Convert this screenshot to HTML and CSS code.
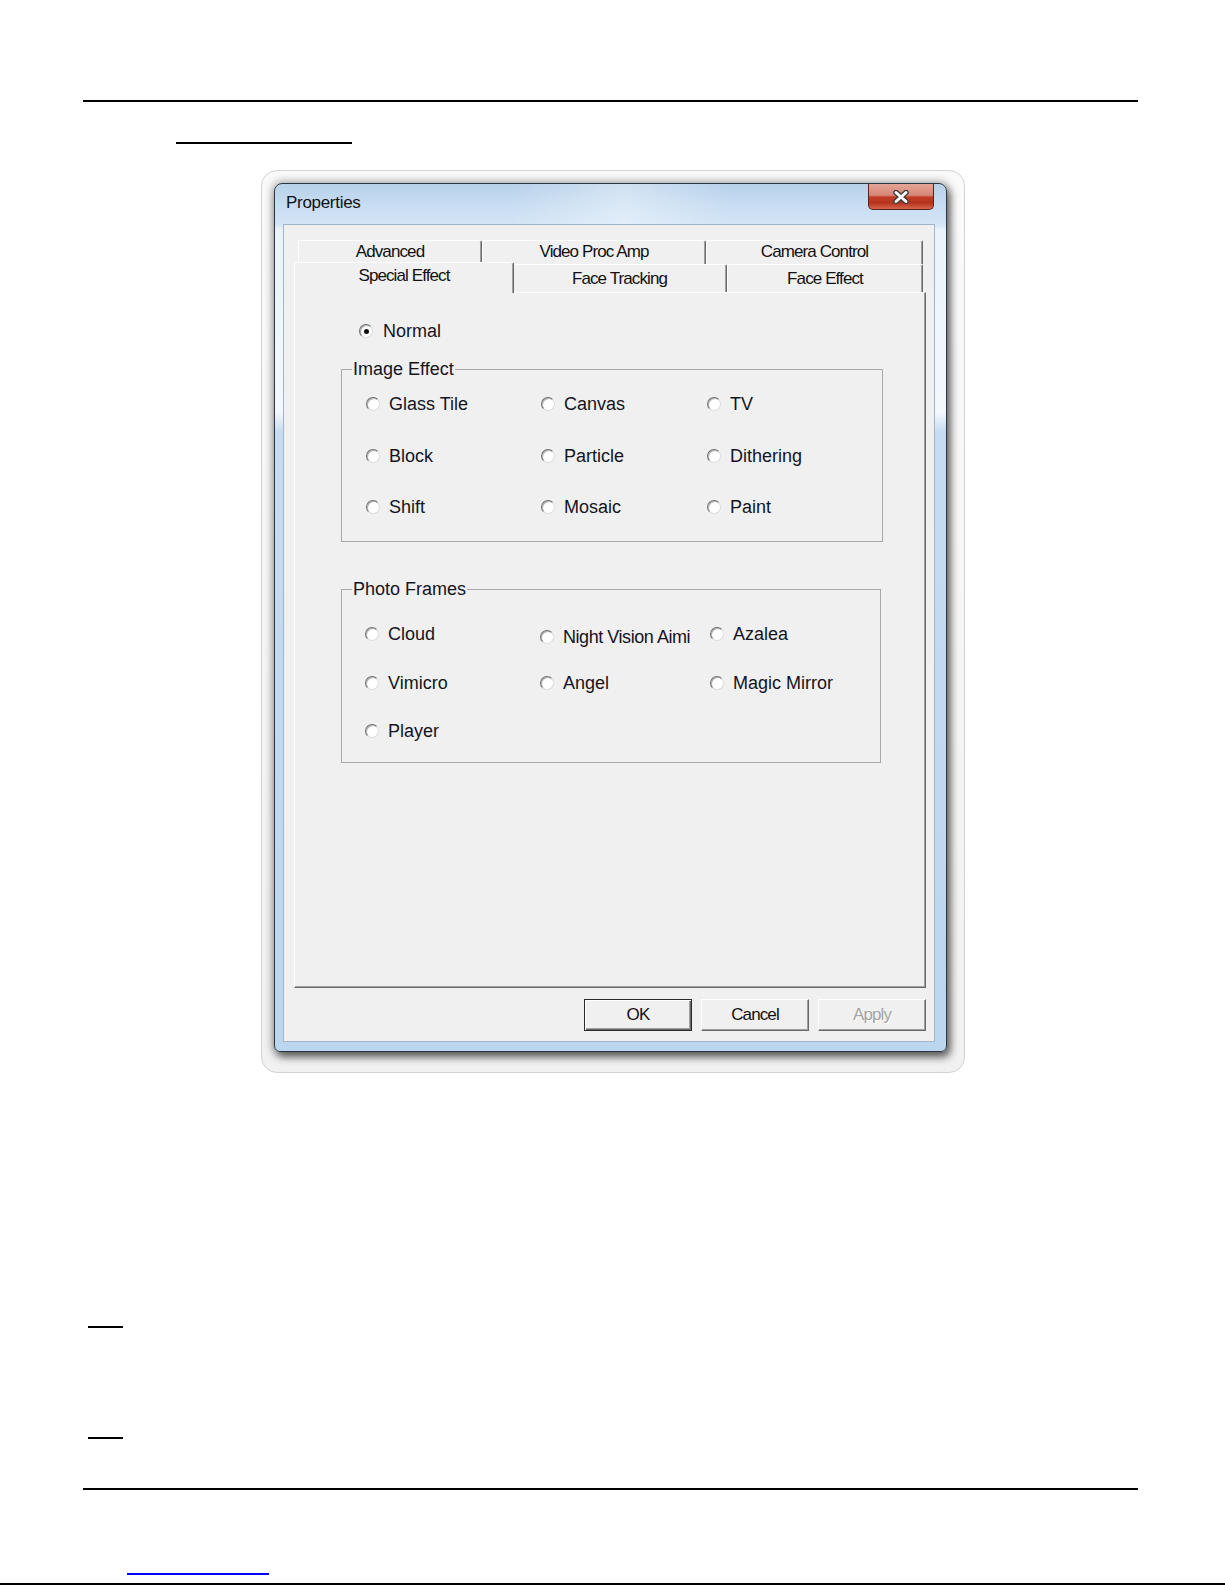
FILE: index.html
```html
<!DOCTYPE html>
<html lang="en">
<head>
    <meta charset="UTF-8">
    <title>Properties</title>
    <link rel="stylesheet" href="styles.css">
</head>
<body>
    <div class="page">
        <div class="rule top_rule"></div>
        <div class="heading_line"></div>

        <div class="shot">
            <div class="window">
                <div class="titlebar">
                    <span class="title">Properties</span>
                    <div class="close_btn">
                        <svg width="18" height="14" viewBox="0 0 18 14">
                            <path d="M4 2.5 L14 11.5 M14 2.5 L4 11.5" stroke="#3a3a3a" stroke-width="5.5" stroke-linecap="round"/>
                            <path d="M4 2.5 L14 11.5 M14 2.5 L4 11.5" stroke="#fff" stroke-width="3" stroke-linecap="round"/>
                        </svg>
                    </div>
                </div>

                <div class="client">
                    <div class="tabs">
                        <div class="tab_row back">
                            <div class="tab t_adv">Advanced</div>
                            <div class="tab t_vpa">Video Proc Amp</div>
                            <div class="tab t_cam">Camera Control</div>
                        </div>
                        <div class="tab_row front">
                            <div class="tab active">Special Effect</div>
                            <div class="tab t_track">Face Tracking</div>
                            <div class="tab t_face">Face Effect</div>
                        </div>
                    </div>

                    <div class="panel">
                        <div class="radio_item normal"><span class="radio checked"></span>Normal</div>

                        <fieldset class="group image_effect">
                            <legend>Image Effect</legend>
                            <div class="options">
                                <div class="radio_item"><span class="radio"></span>Glass Tile</div>
                                <div class="radio_item"><span class="radio"></span>Canvas</div>
                                <div class="radio_item"><span class="radio"></span>TV</div>
                                <div class="radio_item"><span class="radio"></span>Block</div>
                                <div class="radio_item"><span class="radio"></span>Particle</div>
                                <div class="radio_item"><span class="radio"></span>Dithering</div>
                                <div class="radio_item"><span class="radio"></span>Shift</div>
                                <div class="radio_item"><span class="radio"></span>Mosaic</div>
                                <div class="radio_item"><span class="radio"></span>Paint</div>
                            </div>
                        </fieldset>

                        <fieldset class="group photo_frames">
                            <legend>Photo Frames</legend>
                            <div class="options">
                                <div class="radio_item"><span class="radio"></span>Cloud</div>
                                <div class="radio_item low"><span class="radio"></span><span class="tight">Night Vision Aimi</span></div>
                                <div class="radio_item"><span class="radio"></span>Azalea</div>
                                <div class="radio_item"><span class="radio"></span>Vimicro</div>
                                <div class="radio_item"><span class="radio"></span>Angel</div>
                                <div class="radio_item"><span class="radio"></span>Magic Mirror</div>
                                <div class="radio_item"><span class="radio"></span>Player</div>
                            </div>
                        </fieldset>
                    </div>

                    <div class="buttons">
                        <button type="button" class="btn default">OK</button>
                        <button type="button" class="btn">Cancel</button>
                        <button type="button" class="btn disabled">Apply</button>
                    </div>
                </div>
            </div>
        </div>

        <div class="note_line first"></div>
        <div class="note_line"></div>
        <div class="rule bottom_rule"></div>
        <div class="link_line"></div>
    </div>
    <div class="edge_line"></div>
</body>
</html>
```

FILE: styles.css
```css
*{
    margin:0;
    padding:0;
    box-sizing:border-box;
}
body{
    background:#fff;
    font-family:"Liberation Sans", Arial, sans-serif;
    color:#14141f;
}
.page{
    width:1225px;
    padding:0 87px 0 83px;
}
.rule{
    height:2px;
    background:#000;
}
.top_rule{
    margin-top:100px;
}
.heading_line{
    width:176px;
    height:2px;
    background:#000;
    margin:40px 0 0 93px;
}

/* screenshot of the dialog */
.shot{
    width:704px;
    height:903px;
    margin:26px 0 0 178px;
    padding:12px 0 0 12px;
    border:1px solid #d2d2d2;
    border-radius:16px;
    background:linear-gradient(180deg, #fafafa, #f1f1f1);
}
.window{
    width:673px;
    height:869px;
    display:flex;
    flex-direction:column;
    border:1px solid #2e3741;
    border-radius:8px 8px 6px 6px;
    background:linear-gradient(180deg, #b7d1ea 0, #c8ddf2 22px, #d3e4f6 40px, #eaf3fb 46px, #f3f8fd 228px, #c6dcf2 248px, #bcd6ef 100%);
    box-shadow:3px 5px 9px rgba(0,0,0,.55), 0 0 9px 2px rgba(0,0,0,.28);
}
.titlebar{
    height:40px;
    display:flex;
    justify-content:space-between;
    align-items:flex-start;
    padding:0 12px 0 11px;
    border-radius:7px 7px 0 0;
    background:linear-gradient(90deg, rgba(255,255,255,0) 35%, rgba(255,255,255,.35) 52%, rgba(255,255,255,0) 68%);
}
.title{
    margin-top:9px;
    font-size:17px;
    line-height:20px;
    letter-spacing:-0.3px;
    color:#111;
}
.close_btn{
    width:66px;
    height:26px;
    display:flex;
    align-items:center;
    justify-content:center;
    border:1px solid #5a2218;
    border-top:0;
    border-radius:0 0 5px 5px;
    background:linear-gradient(180deg, #e3a597 0, #d78676 45%, #c23d27 52%, #b5321e 75%, #d6654c 100%);
}
.client{
    flex:1;
    display:flex;
    flex-direction:column;
    margin:0 11px 9px 8px;
    padding:15px 8px 10px 10px;
    border:1px solid #a2b4c7;
    background:#f0f0f0;
}

/* tabs */
.tabs{
    height:52px;
}
.tab_row{
    display:flex;
    align-items:flex-end;
}
.tab_row.back{
    height:24px;
    padding-left:4px;
}
.tab_row.front{
    height:28px;
    padding-left:2px;
}
.tab{
    height:100%;
    background:#f0f0f0;
    border:1px solid #fff;
    border-bottom:0;
    border-right-color:#696969;
    box-shadow:inset -1px 0 0 #a0a0a0;
    border-radius:2px 2px 0 0;
    text-align:center;
    font-size:17px;
    letter-spacing:-0.9px;
    color:#111;
}
.back .tab{
    line-height:22px;
}
.front .tab{
    line-height:27px;
}
.t_adv{ width:184px; }
.t_vpa{ width:224px; }
.t_cam{ width:217px; }
.t_track{ width:215px; }
.t_face{ width:196px; }
.tab.active{
    width:220px;
    height:31px;
    margin:0 -2px -1px -2px;
    line-height:26px;
    position:relative;
    z-index:1;
}

/* panel */
.panel{
    flex:1;
    padding-top:28px;
    border:1px solid #fff;
    border-right-color:#696969;
    border-bottom-color:#696969;
    box-shadow:inset -1px -1px 0 #a0a0a0;
}
.radio_item{
    display:flex;
    align-items:center;
    gap:9px;
    height:20px;
    font-size:18px;
    line-height:20px;
    white-space:nowrap;
}
.radio_item.normal{
    margin-left:64px;
    gap:10px;
}
.radio{
    flex:none;
    width:14px;
    height:14px;
    border-radius:50%;
    background:#fff;
    border:1px solid;
    border-color:#707070 #dcdcdc #dcdcdc #707070;
    box-shadow:inset 1px 1px 0 #b0b0b0;
    display:flex;
    align-items:center;
    justify-content:center;
}
.radio.checked::after{
    content:"";
    width:5px;
    height:5px;
    border-radius:50%;
    background:#111;
}
.group{
    margin-left:46px;
    border:1px solid #a9a9a9;
}
.group legend{
    margin-left:10px;
    padding:0 1px;
    font-size:18px;
    line-height:20px;
}
.group .options{
    display:grid;
    grid-auto-rows:20px;
}
.image_effect{
    width:542px;
    margin-top:18px;
}
.image_effect .options{
    grid-template-columns:175px 166px 1fr;
    row-gap:31.5px;
    padding:15px 0 24px 24px;
}
.photo_frames{
    width:540px;
    margin-top:37px;
}
.photo_frames .options{
    grid-template-columns:175px 170px 1fr;
    row-gap:28.5px;
    padding:25px 0 21px 23px;
}
.low{
    margin:3px 0 -3px;
}
.tight{
    letter-spacing:-0.45px;
}

/* buttons */
.buttons{
    display:flex;
    justify-content:flex-end;
    gap:9px;
    margin-top:11px;
}
.btn{
    width:108px;
    height:32px;
    background:#f0f0f0;
    border:1px solid;
    border-color:#fff #696969 #696969 #fff;
    box-shadow:inset -1px -1px 0 #a0a0a0;
    font-family:"Liberation Sans", Arial, sans-serif;
    font-size:17px;
    letter-spacing:-0.9px;
    color:#111;
}
.btn.default{
    border-color:#2a2a2a;
    box-shadow:inset 1px 1px 0 #fff, inset -1px -1px 0 #696969, inset -2px -2px 0 #a0a0a0;
}
.btn.disabled{
    color:#a3a3a3;
    text-shadow:1px 1px 0 #fff;
}

/* lines under the picture */
.note_line{
    width:35px;
    height:2px;
    background:#000;
    margin:109px 0 0 5px;
}
.note_line.first{
    margin-top:253px;
}
.bottom_rule{
    margin-top:49px;
}
.link_line{
    width:142px;
    height:2px;
    background:#0000ff;
    margin:83px 0 0 44px;
}
.edge_line{
    height:2px;
    background:#000;
    margin-top:8px;
}
```
